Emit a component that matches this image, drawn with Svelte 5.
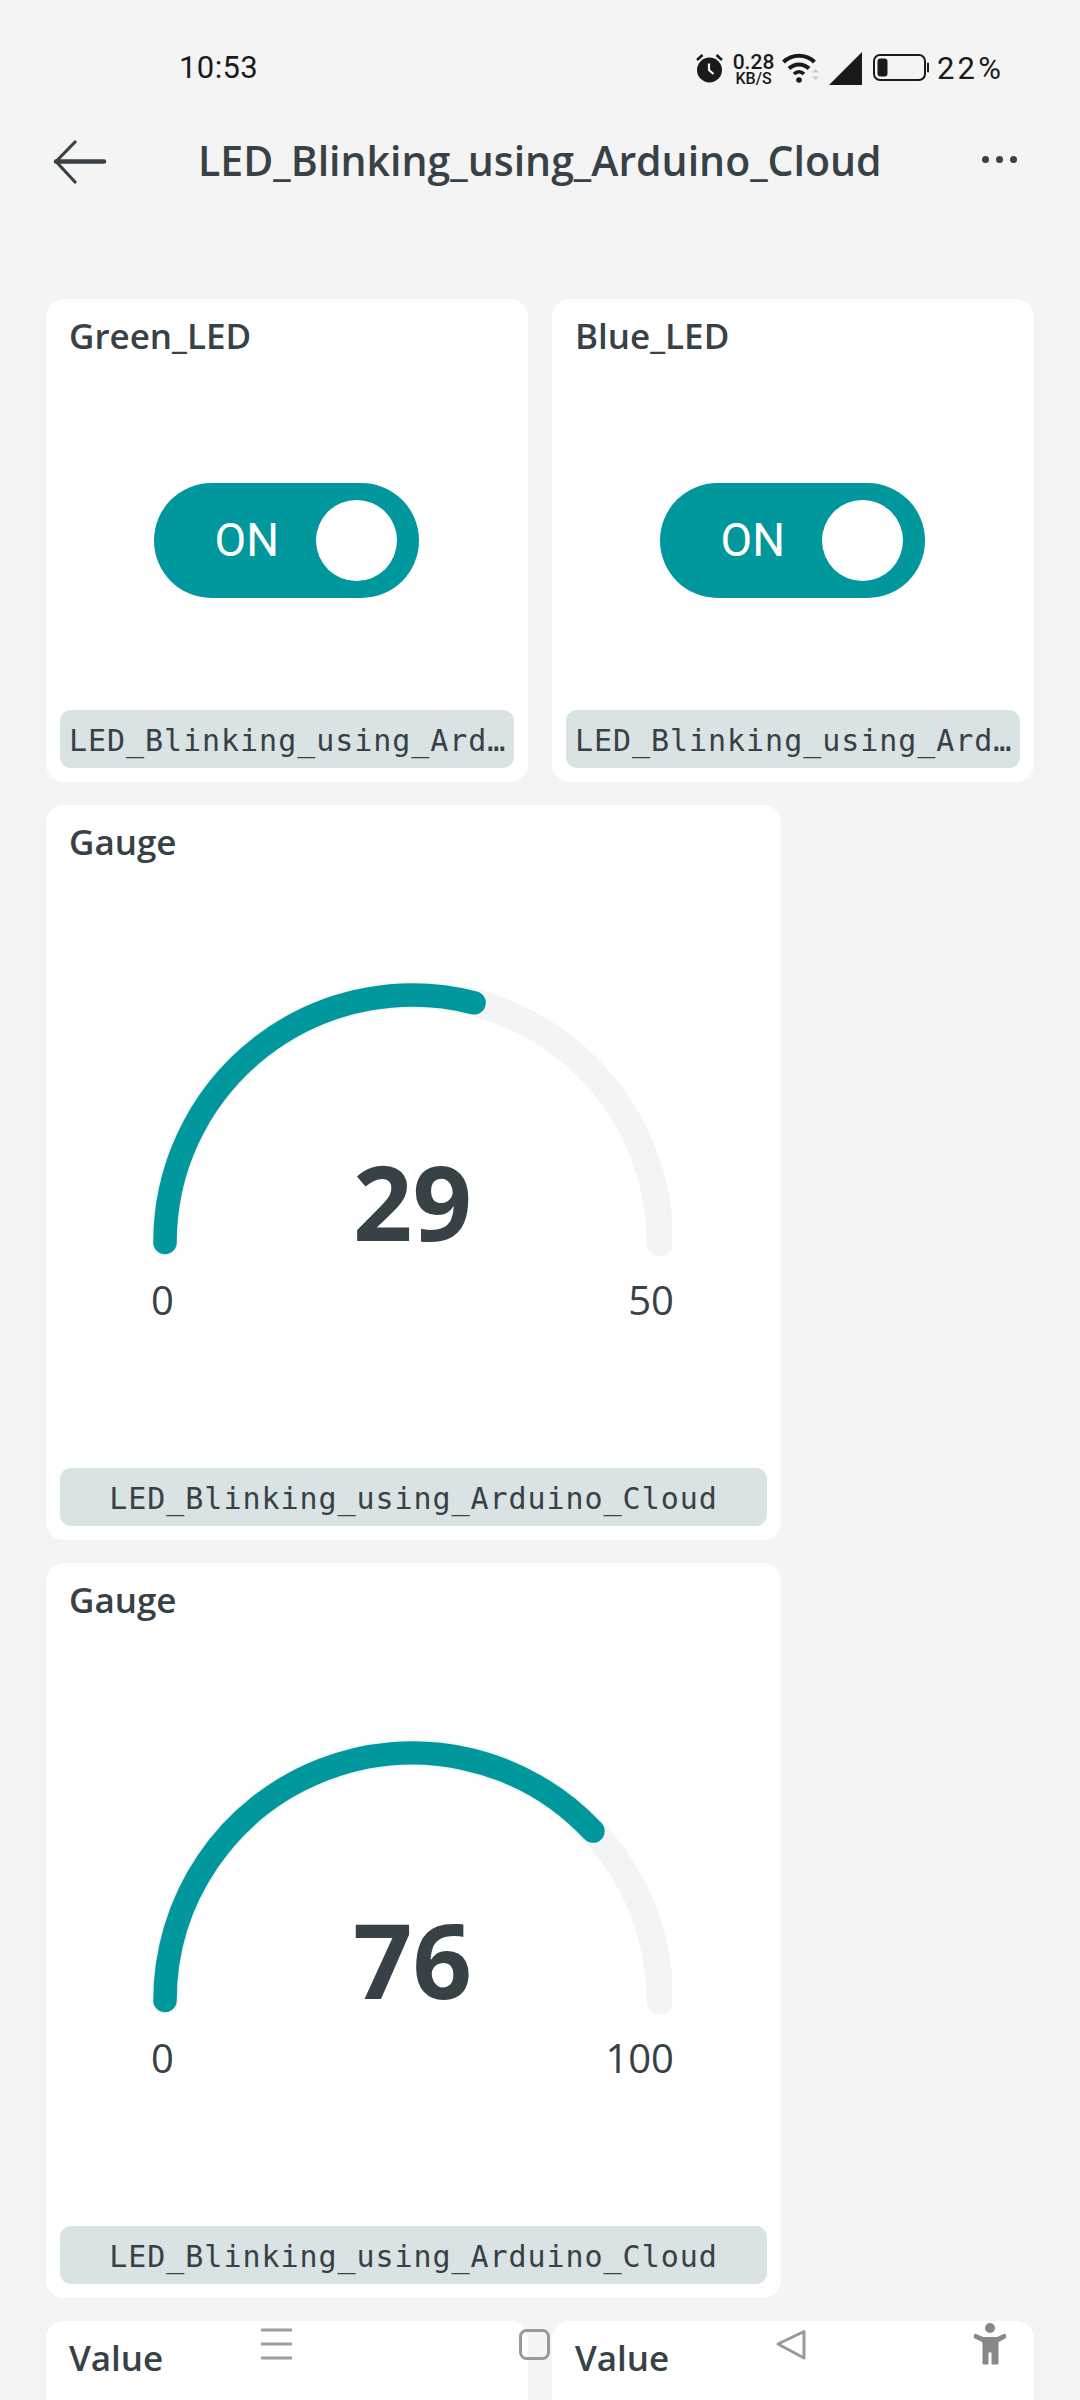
<script>
	const toggles = [{ title: 'Green_LED' }, { title: 'Blue_LED' }];
	const gauges = [
		{ title: 'Gauge', value: 29, max: 50 },
		{ title: 'Gauge', value: 76, max: 100 }
	];
	const thing = 'LED_Blinking_using_Arduino_Cloud';

	// gauge geometry, in svg units
	const cx = 261.5;
	const cy = 282.5;
	const r = 247.5;

	function arc(fraction) {
		const a = Math.PI * fraction;
		const x = cx - r * Math.cos(a);
		const y = cy - r * Math.sin(a);
		return `M ${cx - r} ${cy} A ${r} ${r} 0 0 1 ${x.toFixed(2)} ${y.toFixed(2)}`;
	}
</script>

<div class="page">
	<div class="statusbar">
		<span class="clock">10:53</span>
		<div class="status-icons">
			<svg class="alarm" width="27" height="30" viewBox="0 0 27 30">
				<circle cx="13.5" cy="17" r="12.5" fill="#1a1a1a" />
				<path d="M1 7 L6.5 2 M26 7 L20.5 2" stroke="#1a1a1a" stroke-width="2.6" fill="none" />
				<path d="M13 10.5 L13 17 L17.5 21" stroke="#f4f4f4" stroke-width="2.2" fill="none" />
			</svg>
			<div class="speed">
				<span class="speed-num">0.28</span>
				<span class="speed-unit">KB/S</span>
			</div>
			<svg class="wifi" width="38" height="30" viewBox="0 0 38 30">
				<path d="M1.5 9 C10 0.5 24 0.5 32.5 9" stroke="#1a1a1a" stroke-width="4" fill="none" />
				<path d="M7 15.5 C12.5 10 21.5 10 27 15.5" stroke="#1a1a1a" stroke-width="4" fill="none" />
				<path d="M12 21 C15 18.2 19 18.2 22 21" stroke="#1a1a1a" stroke-width="3.6" fill="none" />
				<circle cx="17" cy="27" r="2.8" fill="#1a1a1a" />
				<path d="M30 19.5 L33.5 16 L37 19.5 Z" fill="#c9c9c9" />
				<path d="M30 23.5 L37 23.5 L33.5 27 Z" fill="#c9c9c9" />
			</svg>
			<svg class="signal" width="33" height="33" viewBox="0 0 33 33">
				<path d="M0 33 L33 0 L33 33 Z" fill="#1a1a1a" />
			</svg>
			<svg class="battery" width="56" height="28" viewBox="0 0 56 28">
				<rect x="1" y="1" width="51" height="25" rx="6" fill="none" stroke="#1a1a1a" stroke-width="2" />
				<rect x="4.5" y="4.5" width="10" height="18" rx="3" fill="#1a1a1a" />
				<rect x="54" y="8.5" width="2" height="10" rx="1" fill="#1a1a1a" />
			</svg>
			<span class="percent">22%</span>
		</div>
	</div>

	<header class="appbar">
		<svg class="back" width="54" height="44" viewBox="0 0 54 44">
			<path d="M3 21.5 L51 21.5" stroke="#374146" stroke-width="4.5" stroke-linecap="round" />
			<path d="M22 2 L3 21.5 L22 42" stroke="#374146" stroke-width="3.2" stroke-linecap="round" stroke-linejoin="round" fill="none" />
		</svg>
		<h1>{thing}</h1>
		<div class="more"><i></i><i></i><i></i></div>
	</header>

	<main class="widgets">
		{#each toggles as t}
			<section class="card small">
				<h2>{t.title}</h2>
				<div class="toggle-area">
					<div class="toggle">
						<span>ON</span>
						<div class="knob"></div>
					</div>
				</div>
				<div class="tag left">{thing}</div>
			</section>
		{/each}

		{#each gauges as g}
			<section class="card large">
				<h2>{g.title}</h2>
				<svg class="gauge" width="521" height="370" viewBox="0 0 521 370">
					<clipPath id="track-clip"><rect width="521" height="370" /></clipPath>
					<path d={arc(1)} class="track" clip-path="url(#track-clip)" />
					<path d={arc(g.value / g.max)} class="fill" />
					<text x={cx} y={cy - 2} text-anchor="middle" class="gauge-value">{g.value}</text>
					<text x="0" y="355" class="gauge-limit">0</text>
					<text x="523" y="355" text-anchor="end" class="gauge-limit">{g.max}</text>
				</svg>
				<div class="tag">{thing}</div>
			</section>
		{/each}

		<section class="card small"><h2>Value</h2></section>
		<section class="card small"><h2>Value</h2></section>
	</main>

	<!-- navigation bar floats over the widgets -->
	<svg class="navbar" width="1080" height="60" viewBox="0 0 1080 60">
		<path d="M261 10 H292 M261 24 H292 M261 38 H292" stroke="#9e9e9e" stroke-width="3" />
		<rect x="520.5" y="10.5" width="28" height="28" rx="6" fill="none" stroke="#999" stroke-width="3" />
		<path d="M804 11.5 L778 24 L804 38 Z" fill="none" stroke="#999" stroke-width="3" stroke-linejoin="round" />
		<circle cx="990" cy="8" r="5" fill="#888" />
		<path d="M975 14 L983 17.5 H997 L1005 14 L1006 17.5 L998 22 V44 H992 V32 H988 V44 H983 V22 L974 17.5 Z" fill="#888" stroke="#888" stroke-linejoin="round" />
	</svg>
</div>

<style>
	:global(body) {
		margin: 0;
		background: #f4f4f4;
	}

	.page {
		position: relative;
		height: 2400px;
		overflow: hidden;
		background: #f4f4f4;
		color: #374146;
		font-family: 'Open Sans', 'Noto Sans', sans-serif;
	}

	.statusbar {
		display: flex;
		align-items: center;
		justify-content: space-between;
		height: 36px;
		padding: 50px 78px 0 179px;
		color: #1a1a1a;
		font-family: Roboto, sans-serif;
	}

	.clock {
		font-size: 31px;
		letter-spacing: 0.4px;
		margin-top: -2px;
	}

	.status-icons {
		display: flex;
		align-items: center;
	}

	.speed {
		display: flex;
		flex-direction: column;
		align-items: center;
		width: 41px;
		margin: 1px 8px 0 10px;
		line-height: 1;
	}

	.speed-num {
		font-size: 21px;
		font-weight: 500;
		height: 19px;
	}

	.speed-unit {
		font-size: 16px;
		font-weight: 500;
		height: 15px;
	}

	.wifi {
		margin-right: 9px;
	}

	.signal {
		margin: 0 11px 0 0;
	}

	.battery {
		margin-right: 8px;
	}

	.percent {
		font-size: 31px;
		letter-spacing: 3.2px;
		width: 65px;
		white-space: nowrap;
	}

	.appbar {
		display: flex;
		align-items: center;
		height: 64px;
		margin-top: 42px;
		padding: 0 63px 0 53px;
	}

	.back {
		flex: none;
		margin-top: 3px;
	}

	h1 {
		flex: 1;
		margin: 0 0 0 91px;
		font-size: 41px;
		font-weight: 600;
		line-height: 64px;
		white-space: nowrap;
	}

	.more {
		display: flex;
		gap: 7px;
		margin-top: -2px;
	}

	.more i {
		width: 7px;
		height: 7px;
		border-radius: 50%;
		background: #374146;
	}

	.widgets {
		display: flex;
		flex-wrap: wrap;
		gap: 23px 24px;
		width: 988px;
		margin: 0 0 0 46px;
		padding-top: 107px;
	}

	.card {
		display: flex;
		flex-direction: column;
		box-sizing: border-box;
		padding: 0 14px 14px;
		background: #fff;
		border-radius: 18px;
	}

	.small {
		width: 482px;
		height: 483px;
	}

	.large {
		width: 735px;
		height: 735px;
	}

	.widgets .large {
		margin-right: 253px;
	}

	h2 {
		margin: 13px 0 0 9px;
		font-size: 35px;
		font-weight: 600;
		line-height: 48px;
	}

	.toggle-area {
		flex: 1;
		display: flex;
		align-items: center;
		justify-content: center;
	}

	.toggle {
		display: flex;
		align-items: center;
		justify-content: space-between;
		box-sizing: border-box;
		width: 265px;
		height: 115px;
		margin: 10px 0 0 -2px;
		padding: 0 22px 0 61px;
		border-radius: 58px;
		background: #00979d;
		color: #fff;
		font-family: Roboto, sans-serif;
		font-size: 46px;
	}

	.knob {
		width: 81px;
		height: 81px;
		border-radius: 50%;
		background: #fff;
	}

	.gauge {
		display: block;
		margin: 94px 0 0 91px;
		overflow: visible;
	}

	.track,
	.fill {
		fill: none;
		stroke-linecap: round;
	}

	.track {
		stroke: #f4f4f4;
		stroke-width: 27;
	}

	.fill {
		stroke: #00979d;
		stroke-width: 23.5;
	}

	.gauge-value {
		fill: #374146;
		font-size: 104px;
		font-weight: 700;
	}

	.gauge-limit {
		fill: #374146;
		font-size: 40px;
	}

	.tag {
		box-sizing: border-box;
		height: 58px;
		margin-top: auto;
		padding: 4px 8px 0;
		border-radius: 11px;
		background: #dae3e3;
		font-family: 'DejaVu Sans Mono', monospace;
		font-size: 30px;
		letter-spacing: 0.95px;
		line-height: 54px;
		text-align: center;
		white-space: nowrap;
		overflow: hidden;
		text-overflow: ellipsis;
	}

	.tag.left {
		padding-left: 9px;
		text-align: left;
	}

	.navbar {
		position: absolute;
		left: 0;
		top: 2320px;
	}
</style>
